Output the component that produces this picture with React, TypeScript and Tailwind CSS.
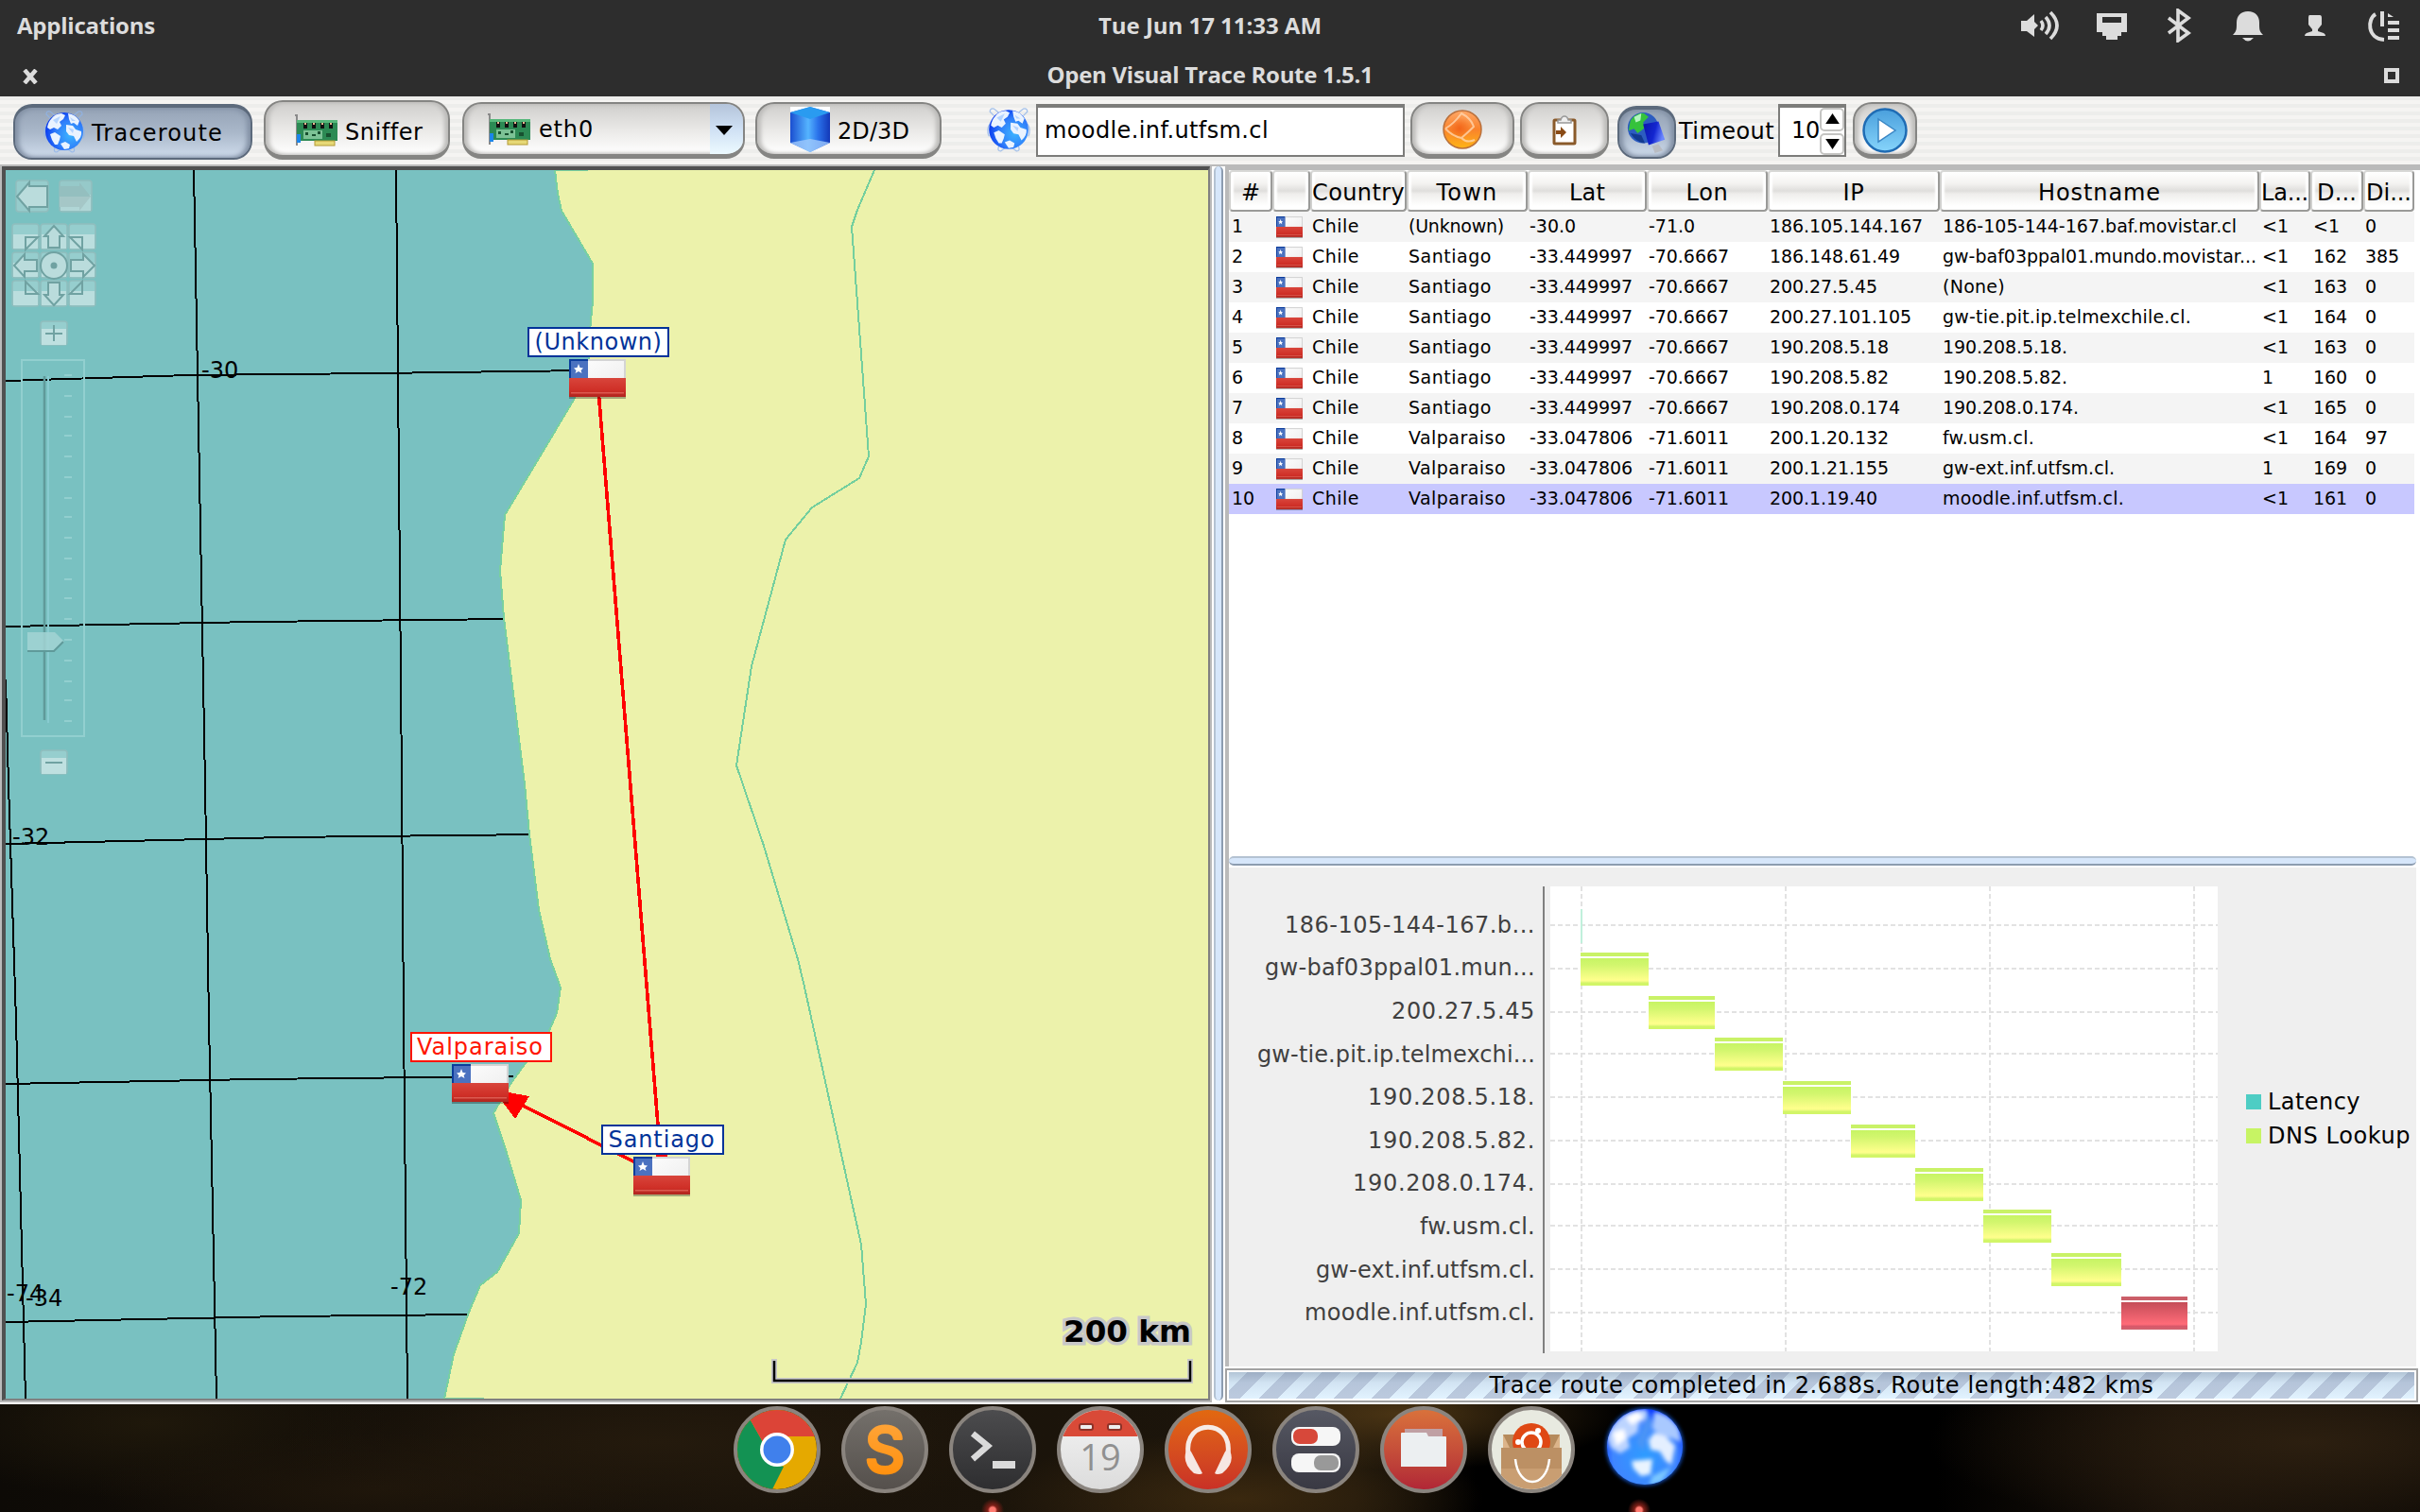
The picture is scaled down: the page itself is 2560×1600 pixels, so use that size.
import React, { useLayoutEffect, useRef, useState } from "react";

/** Text whose tracking is tuned so that its advance is exactly `w` pixels. */
function Fit({ w, children, className = "" }: { w: number; children: string; className?: string }) {
  const ref = useRef<HTMLSpanElement>(null);
  const [ls, setLs] = useState(0);
  useLayoutEffect(() => {
    const el = ref.current;
    if (!el) return;
    el.style.letterSpacing = "0px";
    const natural = el.getBoundingClientRect().width;
    const next = (w - natural) / children.length;
    el.style.letterSpacing = `${next}px`;
    setLs(next);
  }, [w, children]);
  return (
    <span ref={ref} className={`inline-block shrink-0 whitespace-pre ${className}`} style={{ letterSpacing: `${ls}px` }}>
      {children}
    </span>
  );
}

const btn =
  "flex shrink-0 items-center rounded-[20px] border-2 border-b-[5px] border-[#858583] bg-linear-to-b from-[#cfcecc] via-[#e9e8e6] to-white shadow-[inset_4px_0_4px_#bdbcba,inset_-4px_0_4px_#bdbcba]";
const pressed =
  "flex shrink-0 items-center rounded-[20px] border-2 border-t-4 border-[#5c6a7c] bg-linear-to-b from-[#95a3b6] via-[#aab8ca] to-[#cfdcec] shadow-[inset_4px_0_5px_#8391a5,inset_-4px_0_5px_#8391a5]";

function Globe({ className }: { className: string }) {
  return (
    <svg viewBox="0 0 48 48" className={className}>
      <defs>
        <radialGradient id="gl" cx="0.65" cy="0.6" r="0.65">
          <stop offset="0" stopColor="#3cb4ff" />
          <stop offset="0.6" stopColor="#2f7dfa" />
          <stop offset="1" stopColor="#0a3df0" />
        </radialGradient>
      </defs>
      <path d="M9 10 L5 6 Q5 2 9 3 L14 7 M39 10 L43 6 Q43 2 39 3 L34 7 M5 18 Q1 24 4 31 M43 18 Q47 24 44 31 M14 41 Q12 46 16 46 L20 43 M34 41 Q36 46 32 46 L28 43" fill="none" stroke="#8fb4ea" strokeWidth="1.2" opacity="0.8" />
      <circle cx="24" cy="24" r="20" fill="url(#gl)" />
      <path d="M10 11 Q14 5 21 5 L25 7 L23 11 L19 14 L21 18 L17 22 L13 20 L9 22 L6 20 Q7 14 10 11 Z M28 5 Q36 6 40 13 L38 18 L34 15 L31 16 L29 11 Z M26 17 L33 18 L36 22 L42 24 Q43 30 37 35 L34 29 L29 28 L26 24 Z M9 27 L14 25 L20 29 L19 33 L17 38 L14 38 L11 33 Z M20 37 L25 35 L30 38 L29 42 L24 43 Z" fill="#eaf3ff" />
      <path d="M12 12 L20 8 L16 16 Z M30 9 L36 13 L32 13 Z M28 20 L34 22 L33 26 Z" fill="#9cc6ff" opacity="0.7" />
    </svg>
  );
}

function DockGlobe() {
  return (
    <svg viewBox="0 0 96 96" className="-mt-[2px] -mr-1 ml-1 h-[96px] w-[96px] shrink-0 overflow-visible">
      <defs>
        <radialGradient id="dg" cx="0.5" cy="0.62" r="0.6">
          <stop offset="0" stopColor="#2e9cff" />
          <stop offset="0.7" stopColor="#3f86ff" />
          <stop offset="1" stopColor="#0b3cff" />
        </radialGradient>
        <clipPath id="dgc"><circle cx="48" cy="45" r="40" /></clipPath>
        <filter id="soft"><feGaussianBlur stdDeviation="2" /></filter>
      </defs>
      <circle cx="48" cy="45" r="41" fill="#1f6cff" opacity="0.8" filter="url(#soft)" />
      <circle cx="48" cy="45" r="40" fill="url(#dg)" />
      <g clipPath="url(#dgc)">
        <g filter="url(#soft)">
          <path d="M12 26 Q26 4 50 6 L52 14 L42 20 L40 30 L30 36 L32 46 L22 52 L12 46 L8 36 Z" fill="#bcd4ff" />
          <path d="M28 14 L40 8 L46 14 L34 22 Z M14 30 L26 26 L28 36 L18 44 Z" fill="#fff" />
          <path d="M58 8 Q74 10 84 26 L86 40 L76 36 L66 34 L56 26 Z" fill="#a9c9ff" />
          <path d="M58 30 L70 34 L80 44 L76 64 L70 60 L64 50 L54 48 L52 38 Z" fill="#e4efff" />
          <path d="M34 60 L56 58 L54 74 L44 76 L36 68 Z" fill="#e9f4ff" />
          <path d="M56 76 L76 66 L66 82 L52 86 Z" fill="#7cc8ff" />
          <path d="M50 8 L56 20 L50 34 L46 50 L40 40 L46 24 Z" fill="#4f96f4" opacity="0.8" />
        </g>
      </g>
    </svg>
  );
}

function NetCard() {
  return (
    <svg viewBox="0 0 46 34" className="h-[34px] w-[46px] shrink-0">
      <path d="M1 1 H3 V33" fill="none" stroke="#8a8a8a" strokeWidth="2" />
      <rect x="3" y="6" width="43" height="22" fill="#2c8a54" />
      <rect x="3" y="6" width="43" height="3" fill="#58b87c" />
      <path d="M10 9 h4 v6 h-4z M19 9 h4 v6 h-4z M28 9 h4 v6 h-4z M37 9 h4 v6 h-4z" fill="#111" />
      <path d="M11 9 h2 v2 h-2z M20 9 h2 v2 h-2z M29 9 h2 v2 h-2z M38 9 h2 v2 h-2z" fill="#e8b890" />
      <rect x="10" y="17" width="20" height="9" fill="#7cc295" />
      <path d="M12 19 h3 v3 h-3z M19 21 h4 v2 h-4z M25 18 h3 v3 h-3z M34 20 h5 v4 h-5z" fill="#17502f" />
      <rect x="3" y="21" width="4" height="9" fill="#1c86ea" />
      <rect x="22" y="28" width="21" height="5" fill="#e6d877" stroke="#b39a34" strokeWidth="1" />
    </svg>
  );
}

function Flag({ className }: { className: string }) {
  return (
    <svg viewBox="0 0 60 42" preserveAspectRatio="none" className={className}>
      <defs>
        <linearGradient id="fr" x1="0" y1="0" x2="0" y2="1">
          <stop offset="0" stopColor="#d8453b" />
          <stop offset="0.65" stopColor="#cf2f27" />
          <stop offset="1" stopColor="#b0261f" />
        </linearGradient>
        <linearGradient id="fw" x1="0" y1="0" x2="1" y2="1">
          <stop offset="0" stopColor="#ffffff" />
          <stop offset="1" stopColor="#ebebeb" />
        </linearGradient>
      </defs>
      <rect x="0" y="2" width="60" height="40" fill="#000" opacity="0.3" />
      <rect x="1" y="1" width="58" height="38" fill="url(#fw)" stroke="#d4d4d4" strokeWidth="2" />
      <rect x="0" y="20" width="60" height="20" fill="url(#fr)" />
      <rect x="2" y="35" width="56" height="1.500" fill="#dc5a50" />
      <rect x="0" y="0" width="20" height="20" fill="#0b3c9c" />
      <rect x="2" y="2" width="18" height="18" fill="#4b72c0" />
      <path d="M10 5 L11.500 9 L15 9.500 L12.500 12 L13.500 15 L10 13 L6.500 15 L7.500 12 L5 9.500 L8.500 9 Z" fill="#fff" />
    </svg>
  );
}

function TopBar() {
  return (
    <header className="h-[102px] bg-[#2d2d2d] font-['Open_Sans'] text-[24px] font-bold text-[#dcdcdc]">
      <div className="grid h-[54px] grid-cols-[1fr_auto_1fr] items-center">
        <div className="pl-[18px]"><Fit w={146}>Applications</Fit></div>
        <Fit w={236}>Tue Jun 17 11:33 AM</Fit>
        <div className="flex items-center justify-end pr-[22px]">
          <svg viewBox="0 0 40 36" className="mr-[40px] h-9 w-10">
            <path d="M0 13 H6 L14 6 V30 L6 24 H0 Z M14 14 L18 18 L14 22 Z" fill="#dcdcdc" />
            <path d="M21 13 Q25 18 21 23 M26 9 Q34 18 26 27 M31 4 Q45 18 31 32" fill="none" stroke="#dcdcdc" strokeWidth="3.600" />
          </svg>
          <svg viewBox="0 0 32 36" className="mr-[42px] h-9 w-8">
            <path fillRule="evenodd" d="M0 5 H32 V25 H26 V29 H22 V33 H10 V29 H6 V25 H0 Z M6 9 V15 H26 V9 Z" fill="#dcdcdc" />
          </svg>
          <svg viewBox="0 0 26 36" className="mr-[44px] h-9 w-[26px]">
            <path d="M2 10 L23 26 L12 34 V2 L23 10 L2 26" fill="none" stroke="#dcdcdc" strokeWidth="3.600" />
          </svg>
          <svg viewBox="0 0 32 36" className="mr-[44px] h-9 w-8">
            <path d="M16 3 C24 3 28 8 28 15 C28 22 28 24 32 28 H0 C4 24 4 22 4 15 C4 8 8 3 16 3 Z M10 31 H22 Q16 38 10 31 Z" fill="#dcdcdc" />
          </svg>
          <svg viewBox="0 0 22 36" className="mr-[44px] h-9 w-[22px]">
            <path d="M5 7 H16 Q18 7 18 10 V17 L14 22 V24 L20 26 Q22 27 22 29 H0 Q0 27 2 26 L8 24 V22 L4 17 V10 Q4 7 5 7 Z" fill="#dcdcdc" />
          </svg>
          <svg viewBox="0 0 34 36" className="h-9 w-[34px]">
            <path d="M9 6 C0 11 0 32 18 33" fill="none" stroke="#dcdcdc" strokeWidth="4" />
            <path d="M14 3 H18 V19 H14 Z M22 5 L28 9 H22 Z M22 13 H34 V17 H22 Z M22 21 H34 V25 H22 Z M22 29 H34 V33 H22 Z" fill="#dcdcdc" />
          </svg>
        </div>
      </div>
      <div className="grid h-12 grid-cols-[1fr_auto_1fr] items-center pt-[2px]">
        <svg viewBox="0 0 16 16" className="ml-6 mt-1 h-4 w-4">
          <path d="M2 1 L14 15 M14 1 L2 15" stroke="#dcdcdc" strokeWidth="4.500" />
        </svg>
        <Fit w={345}>Open Visual Trace Route 1.5.1</Fit>
        <div className="mr-[22px] mt-[2px] h-4 w-4 justify-self-end border-4 border-[#dcdcdc]" />
      </div>
    </header>
  );
}

function Toolbar() {
  return (
    <div className="flex h-[72px] shrink-0 items-start bg-[repeating-linear-gradient(180deg,#ededeb_0_4px,#f5f4f2_4px_8px)]">
      <div className={`${pressed} ml-[14px] mt-2 h-[59px] w-[253px] pl-[28px]`}>
        <Globe className="mb-1 h-[48px] w-[48px]" />
        <Fit w={139} className="ml-[5px]">Traceroute</Fit>
      </div>
      <div className={`${btn} ml-3 mt-1 h-[63px] w-[197px] pl-[30px] pt-1`}>
        <NetCard />
        <Fit w={82} className="ml-[8px] mt-1">Sniffer</Fit>
      </div>
      <div className={`${btn} ml-[13px] mt-[6px] h-[60px] w-[299px] overflow-hidden pl-[24px]`}>
        <NetCard />
        <Fit w={58} className="ml-[9px]">eth0</Fit>
        <div className="ml-auto flex h-full w-[35px] items-center bg-linear-to-b from-[#b4c4da] via-[#cfe0f4] to-[#ecfaff] pl-[6px]">
          <svg viewBox="0 0 18 10" className="mt-[2px] h-[10px] w-[18px]"><path d="M0 0 H18 L9 10 Z" /></svg>
        </div>
      </div>
      <div className={`${btn} ml-[11px] mt-[6px] h-[60px] w-[197px] pl-[35px]`}>
        <svg viewBox="0 0 42 48" className="h-[48px] w-[42px] shrink-0">
          <defs>
            <linearGradient id="cy" x1="0" x2="1" y1="0" y2="0">
              <stop offset="0" stopColor="#1a4ed0" /><stop offset="0.45" stopColor="#55b4ff" /><stop offset="0.7" stopColor="#2a72ea" /><stop offset="1" stopColor="#1338b8" />
            </linearGradient>
          </defs>
          <rect width="42" height="8" fill="#fff" />
          <path d="M0 6 L21 0 L42 6 V38 L21 48 L0 38 Z" fill="url(#cy)" />
          <path d="M0 6 L21 0 L42 6 L21 13 Z" fill="#2a9bf0" />
          <path d="M0 38 L21 34 L42 38 L21 48 Z" fill="#9fc8fb" opacity="0.8" />
        </svg>
        <Fit w={76} className="ml-[8px] mt-1">2D/3D</Fit>
      </div>
      <Globe className="ml-[46px] mt-[10px] h-[50px] w-[50px] shrink-0" />
      <div className="ml-[4px] mt-2 flex h-14 w-[390px] shrink-0 items-center border-2 border-t-4 border-[#7c7c7a] bg-white pb-[3px] pl-[7px]">
        <Fit w={237}>moodle.inf.utfsm.cl</Fit>
      </div>
      <div className={`${btn} ml-[6px] mt-[6px] h-[60px] w-[110px] justify-center`}>
        <svg viewBox="0 0 42 42" className="h-[42px] w-[42px]">
          <defs>
            <linearGradient id="or" x1="0" y1="0" x2="0" y2="1"><stop offset="0" stopColor="#ffa766" /><stop offset="0.5" stopColor="#f9832c" /><stop offset="1" stopColor="#ffb515" /></linearGradient>
            <radialGradient id="or2"><stop offset="0" stopColor="#f2661a" /><stop offset="1" stopColor="#f2661a" stopOpacity="0" /></radialGradient>
          </defs>
          <circle cx="21" cy="21" r="20" fill="url(#or)" stroke="#b9703c" strokeWidth="1.500" />
          <circle cx="18" cy="20" r="12" fill="url(#or2)" />
          <path d="M3 20 Q12 15 20 4 Q30 9 33 18 Q27 24 20 30 Q10 28 3 20 M20 30 Q26 36 34 32" fill="none" stroke="#ffd9b4" strokeWidth="2" opacity="0.75" />
        </svg>
      </div>
      <div className={`${btn} ml-[6px] mt-[6px] h-[60px] w-[94px] justify-center`}>
        <svg viewBox="0 0 26 32" className="mt-[3px] h-8 w-[26px]">
          <rect x="2" y="5" width="22" height="25" rx="1" fill="#fff" stroke="#8a5a2a" strokeWidth="3" />
          <path d="M6 8 V5 H9 Q10 1 13 1 Q16 1 17 5 H20 V8 Z" fill="#eee" stroke="#999" strokeWidth="1.500" />
          <path d="M4 16 H9 V12 L15 18 L9 24 V20 H4 Z" fill="#8a4b16" />
        </svg>
      </div>
      <div className={`${pressed} ml-[9px] mt-[10px] h-[56px] w-[62px] justify-center`}>
        <svg viewBox="0 0 44 48" className="h-[46px] w-[44px]">
          <defs><linearGradient id="mo" x1="0" y1="0" x2="1" y2="0.3"><stop offset="0" stopColor="#0a14a8" /><stop offset="0.6" stopColor="#1326d0" /><stop offset="1" stopColor="#6a86ff" /></linearGradient></defs>
          <circle cx="18" cy="18" r="17" fill="#2c5cc0" />
          <path d="M4 10 Q10 1 19 2 L24 6 L18 12 L20 18 L12 24 L8 19 L2 21 Z" fill="#35c23c" />
          <path d="M8 6 L16 2 L15 10 L10 12 Z" fill="#b4f5c0" />
          <path d="M4 24 Q10 34 20 35 L16 26 Z" fill="#123a90" />
          <path d="M18 14 L35 11 L42 31 L24 37 Z" fill="url(#mo)" />
          <path d="M28 38 L35 36 L40 43 L31 46 Z" fill="#b9bcc2" />
        </svg>
      </div>
      <Fit w={101} className="ml-[3px] mt-[23px]">Timeout</Fit>
      <div className="ml-[4px] mt-2 flex h-14 w-[72px] shrink-0 border-2 border-t-4 border-[#7c7c7a] bg-white">
        <Fit w={30} className="ml-[12px] mt-[10px]">10</Fit>
        <div className="flex flex-1 flex-col gap-[2px]">
          <div className="flex flex-1 items-end justify-center rounded-[5px] border-2 border-[#c4c4c2] bg-white pb-[6px]">
            <svg viewBox="0 0 16 12" className="h-[11px] w-[15px]"><path d="M0 12 L8 0 L16 12 Z" /></svg>
          </div>
          <div className="flex flex-1 items-start justify-center rounded-[5px] border-2 border-[#c4c4c2] bg-white pt-[4px]">
            <svg viewBox="0 0 16 12" className="h-[11px] w-[15px]"><path d="M0 0 L8 12 L16 0 Z" /></svg>
          </div>
        </div>
      </div>
      <div className={`${btn} ml-[7px] mt-[6px] h-[60px] w-[68px] justify-center`}>
        <svg viewBox="0 0 48 48" className="mt-[2px] h-[48px] w-[48px] shrink-0">
          <defs><linearGradient id="pl" x1="0" y1="0" x2="0" y2="1"><stop offset="0" stopColor="#4a9fdc" /><stop offset="1" stopColor="#86d4fb" /></linearGradient></defs>
          <circle cx="24" cy="24" r="22.500" fill="url(#pl)" stroke="#1f6cb4" strokeWidth="2.500" />
          <path d="M17 12 L35 24 L17 36 Z" fill="#fff" stroke="#3a86c4" strokeWidth="1.500" />
        </svg>
      </div>
    </div>
  );
}

const ticks = Array.from({ length: 18 }, (_, i) => 397 + Math.round(i * 10.77) * 2);

function MapPanel() {
  return (
    <div className="relative h-[1300px] w-[1272px] overflow-hidden bg-[#79c1c1]">
      <svg viewBox="6 180 1272 1300" className="block h-[1300px] w-[1272px]">
        <g fill="none" stroke="#000" strokeWidth="2" shapeRendering="crispEdges">
          <path d="M205 180 L217 830 L221 1080 L229 1480 M419 180 L425 830 L427 1080 L431 1480 M6 719 L9 830 L17 1080 L27 1480" />
          <path d="M6 403 L200 397 L400 395 L620 392 M6 663 L270 658 L540 655 M6 893 L300 886 L570 883 M6 1147 L270 1142 L543 1139 M6 1399 L300 1393 L500 1391" />
        </g>
        <path
          d="M587 180 L590 205 L594 223 L627 279 L627 319 L624 350 L622 390 L607 423 L534 545 L529 604 L533 654 L555 830 L560 883 L570 963 L582 1015 L593 1045 L589 1072 L580 1093 L556 1125 L540 1147 L522 1178 L536 1220 L551 1270 L549 1305 L526 1346 L508 1360 L495 1391 L480 1433 L470 1480 L1290 1490 L1290 170 Z"
          fill="#ecf2ab" stroke="#78d0a0" strokeWidth="2" shapeRendering="crispEdges"
        />
        <path d="M543 1139 H533" stroke="#000" strokeWidth="2" />
        <path
          d="M925 180 L907 222 L901 240 L919 483 L909 506 L859 537 L831 571 L795 705 L779 810 L808 895 L844 1015 L850 1040 L911 1317 L916 1380 L911 1420 L907 1442 L889 1480"
          fill="none" stroke="#74cf9e" strokeWidth="2" shapeRendering="crispEdges"
        />
        <g stroke="#f00" strokeWidth="3.600" shapeRendering="crispEdges">
          <path d="M632 400 L700 1240 M700 1244 L545 1166" fill="none" />
          <path d="M522 1153 L560 1160 L545 1184 Z M694 1220 H706 V1226 H694 Z" fill="#f00" stroke="none" />
        </g>
        <g fontFamily="DejaVu Sans" fontSize="24">
          <text x="213" y="400">-30</text>
          <text x="13" y="894">-32</text>
          <text x="7" y="1377">-74</text>
          <text x="27" y="1382">-34</text>
          <text x="413" y="1370">-72</text>
        </g>
        <text x="1125" y="1420" fontFamily="DejaVu Sans" fontWeight="bold" fontSize="32" textLength="135" lengthAdjust="spacingAndGlyphs" stroke="#c8c8c8" strokeWidth="7" paintOrder="stroke">200 km</text>
        <path d="M819 1438 V1461 H1259 V1438" fill="none" stroke="#c8c8c8" strokeWidth="6" />
        <path d="M819 1440 V1461 H1259 V1440" fill="none" stroke="#000" strokeWidth="2.500" />

        <g opacity="0.62">
          <g fill="#d5e8e8" stroke="#9fbcbc" strokeWidth="1.500">
            <rect x="17" y="191" width="34" height="33" rx="3" fill="#a9d4d4" />
            <rect x="63" y="191" width="34" height="33" rx="3" fill="#a9cfcf" />
            <rect x="64" y="206" width="32" height="17" fill="#d3e4e4" stroke="none" />
            {[13, 43, 73].map((x) => [237, 267, 297].map((y) => (
              <g key={`${x}-${y}`}>
                <rect x={x} y={y} width="28" height="27" rx="3" fill="#a9d6d6" />
                <rect x={x + 1} y={y + 11} width="26" height="15" fill="#e4f0f0" stroke="none" />
              </g>
            )))}
            <rect x="43" y="340" width="28" height="25" rx="3" fill="#a9d6d6" />
            <rect x="44" y="348" width="26" height="17" stroke="none" fill="#eaf4f4" />
            <rect x="43" y="794" width="28" height="25" rx="3" fill="#a9d6d6" />
            <rect x="44" y="802" width="26" height="17" stroke="none" fill="#eaf4f4" />
          </g>
          <g fill="none" stroke="#6b9090" strokeWidth="2">
            <path d="M18 208 L31 193 V197 H50 V219 H31 V223 Z" fill="#e2eeee" />
            <path d="M96 208 L84 193 V197 H63 V208 Z" fill="#a6bebe" stroke="none" />
            <path d="M96 208 L84 223 V219 H63 V208 Z" fill="#c0cccc" stroke="none" />
            <path d="M57 239 L67 250 H63 V262 H51 V250 H47 Z M57 323 L67 312 H63 V299 H51 V312 H47 Z M15 281 L26 269 V275 H39 V287 H26 V293 Z M100 281 L88 269 V275 H75 V287 H88 V293 Z" fill="#e2eeee" />
            <path d="M27 264 V251 H40 Z M87 264 V251 H74 Z M27 298 V311 H40 Z M87 298 V311 H74 Z" />
            <circle cx="57" cy="281" r="14" fill="#e2eeee" />
            <circle cx="57" cy="281" r="2.500" fill="#6b9090" />
            <path d="M57 344 V361 M48 353 H66 M48 807 H66" />
          </g>
        </g>
        <g fill="none" stroke="#92cfcf" strokeWidth="2">
          <rect x="23" y="381" width="66" height="398" />
          {ticks.map((y) => <path key={y} d={`M68 ${y} H76`} />)}
          <path d="M51 398 V765" stroke="#88cbd0" />
        </g>
        <path d="M47 398 V762" stroke="#5f9a9a" strokeWidth="2.500" />
        <path d="M29 669 H58 L68 679 L58 689 H29 Z" fill="#a2d4d4" fillOpacity="0.85" />
        <path d="M29 689 H57 L67 679" fill="none" stroke="#5f9a9a" strokeWidth="2" />
      </svg>
      <div className="absolute left-[552px] top-[166px] flex h-8 w-[150px] items-center justify-center border-2 border-[#039] bg-white text-[#039]"><Fit w={135}>(Unknown)</Fit></div>
      <div className="absolute left-[428px] top-[912px] flex h-8 w-[150px] items-center justify-center border-2 border-[#ff1500] bg-white text-[#ff1500]"><Fit w={134} className="-ml-[2px]">Valparaiso</Fit></div>
      <div className="absolute left-[630px] top-[1010px] flex h-8 w-[130px] items-center justify-center border-2 border-[#039] bg-white text-[#039]"><Fit w={113} className="-ml-[2px]">Santiago</Fit></div>
      <Flag className="absolute left-[596px] top-[200px] h-[42px] w-[60px]" />
      <Flag className="absolute left-[472px] top-[946px] h-[42px] w-[60px]" />
      <Flag className="absolute left-[664px] top-[1044px] h-[42px] w-[60px]" />
    </div>
  );
}

const grid = "grid grid-cols-[46px_40px_102px_128px_126px_128px_182px_338px_54px_56px_54px]";
const heads: [string, number][] = [["#", 20], ["", 0], ["Country", 98], ["Town", 65], ["Lat", 38], ["Lon", 45], ["IP", 23], ["Hostname", 130], ["La...", 50], ["D...", 42], ["Di...", 48]];

type Hop = [string, number, string, string, string, string, number, string, string, string];
const hops: Hop[] = [
  ["(Unknown)", 101, "-30.0", "-71.0", "186.105.144.167", "186-105-144-167.baf.movistar.cl", 311, "<1", "<1", "0"],
  ["Santiago", 88, "-33.449997", "-70.6667", "186.148.61.49", "gw-baf03ppal01.mundo.movistar...", 332, "<1", "162", "385"],
  ["Santiago", 88, "-33.449997", "-70.6667", "200.27.5.45", "(None)", 66, "<1", "163", "0"],
  ["Santiago", 88, "-33.449997", "-70.6667", "200.27.101.105", "gw-tie.pit.ip.telmexchile.cl.", 263, "<1", "164", "0"],
  ["Santiago", 88, "-33.449997", "-70.6667", "190.208.5.18", "190.208.5.18.", 132, "<1", "163", "0"],
  ["Santiago", 88, "-33.449997", "-70.6667", "190.208.5.82", "190.208.5.82.", 132, "1", "160", "0"],
  ["Santiago", 88, "-33.449997", "-70.6667", "190.208.0.174", "190.208.0.174.", 144, "<1", "165", "0"],
  ["Valparaiso", 103, "-33.047806", "-71.6011", "200.1.20.132", "fw.usm.cl.", 97, "<1", "164", "97"],
  ["Valparaiso", 103, "-33.047806", "-71.6011", "200.1.21.155", "gw-ext.inf.utfsm.cl.", 182, "1", "169", "0"],
  ["Valparaiso", 103, "-33.047806", "-71.6011", "200.1.19.40", "moodle.inf.utfsm.cl.", 192, "<1", "161", "0"],
];

function num(s: string) {
  return [...s].reduce((a, c) => a + (c === "." ? 6 : c === "-" ? 7 : c === "<" ? 16 : 12), 0);
}

function HopTable() {
  return (
    <div className="h-[726px] w-[1260px] bg-white">
      <div className={`${grid} h-11`}>
        {heads.map(([h, w], i) => (
          <div key={i} className="flex items-center justify-center overflow-hidden rounded-[4px] border-b-2 border-l-2 border-r-2 border-t-2 border-b-[#9a9a98] border-l-[#d0d0ce] border-r-[#9a9a98] border-t-[#d8d8d6] bg-[linear-gradient(180deg,#fff_0%,#f4f3f1_30%,#dfdedc_50%,#efeeec_58%,#fff_90%)] pt-[4px] shadow-[inset_3px_0_2px_#fff,inset_-3px_0_2px_#fff]">
            {h && <Fit w={w}>{h}</Fit>}
          </div>
        ))}
      </div>
      {hops.map((r, i) => (
        <div key={i} className={`${grid} h-8 w-[1254px] items-center text-[19px] leading-[30px] ${i === 9 ? "bg-[#c8c8ff]" : i % 2 ? "bg-white" : "bg-[#f4f4f4]"}`}>
          <Fit w={num(String(i + 1))} className="-mt-[2px] ml-[3px] justify-self-start">{String(i + 1)}</Fit>
          <Flag className="ml-1 h-[23px] w-7" />
          <Fit w={50} className="-mt-[2px] ml-[2px] justify-self-start">Chile</Fit>
          <Fit w={r[1]} className="-mt-[2px] ml-[2px] justify-self-start">{r[0]}</Fit>
          <Fit w={num(r[2])} className="-mt-[2px] ml-[2px] justify-self-start">{r[2]}</Fit>
          <Fit w={num(r[3])} className="-mt-[2px] ml-[2px] justify-self-start">{r[3]}</Fit>
          <Fit w={num(r[4])} className="-mt-[2px] ml-[2px] justify-self-start">{r[4]}</Fit>
          <Fit w={r[6]} className="-mt-[2px] ml-[3px] justify-self-start">{r[5]}</Fit>
          <Fit w={num(r[7])} className="-mt-[2px] ml-[3px] justify-self-start">{r[7]}</Fit>
          <Fit w={num(r[8])} className="-mt-[2px] ml-[3px] justify-self-start">{r[8]}</Fit>
          <Fit w={num(r[9])} className="-mt-[2px] ml-[2px] justify-self-start">{r[9]}</Fit>
        </div>
      ))}
    </div>
  );
}

const labels: [string, number][] = [
  ["186-105-144-167.b...", 265], ["gw-baf03ppal01.mun...", 286], ["200.27.5.45", 152], ["gw-tie.pit.ip.telmexchi...", 294], ["190.208.5.18.", 177],
  ["190.208.5.82.", 177], ["190.208.0.174.", 193], ["fw.usm.cl.", 122], ["gw-ext.inf.utfsm.cl.", 232], ["moodle.inf.utfsm.cl.", 244],
];
const rowY = [979, 1025, 1071, 1115, 1161, 1207, 1253, 1297, 1343, 1389];
const edges = [1672, 1744, 1814, 1886, 1958, 2026, 2098, 2170, 2244, 2314];

function Chart() {
  return (
    <div className="flex h-[528px] w-[1256px] bg-[#efefef]">
      <div className="flex w-[332px] flex-col items-end pr-[8px] pt-[38px] text-[#404040]">
        {labels.map(([t, w]) => (
          <div key={t} className="flex h-[45.600px] items-center"><Fit w={w}>{t}</Fit></div>
        ))}
      </div>
      <div className="mt-5 h-[494px] w-[2px] bg-[#808080]" />
      <svg viewBox="1640 938 706 492" className="ml-[6px] mt-5 h-[492px] w-[706px] shrink-0 bg-white">
        <defs>
          <linearGradient id="bg" x1="0" y1="0" x2="0" y2="1">
            <stop offset="0" stopColor="#c7f464" /><stop offset="0.25" stopColor="#d2f66e" /><stop offset="0.8" stopColor="#ffff8c" /><stop offset="0.86" stopColor="#ecfa80" /><stop offset="0.9" stopColor="#d2f568" /><stop offset="1" stopColor="#d2f568" />
          </linearGradient>
          <linearGradient id="br" x1="0" y1="0" x2="0" y2="1">
            <stop offset="0" stopColor="#c44d58" /><stop offset="0.8" stopColor="#ff6b78" /><stop offset="0.88" stopColor="#d8586a" /><stop offset="1" stopColor="#d06470" />
          </linearGradient>
        </defs>
        <g stroke="#e2e2e2" strokeWidth="2" strokeDasharray="5 3">
          {[1673, 1889, 2105, 2321].map((x) => <path key={x} d={`M${x} 938 V1430`} />)}
          {rowY.map((y) => <path key={y} d={`M1640 ${y} H2346`} />)}
        </g>
        <rect x="1672" y="962" width="2" height="36" fill="#c0f0dc" />
        {rowY.slice(1).map((y, i) => (
          <g key={y}>
            <rect x={edges[i]} y={y - 17} width={edges[i + 1] - edges[i]} height="35" fill="#fff" />
            <rect x={edges[i]} y={y - 17} width={edges[i + 1] - edges[i]} height="4" fill={i === 8 ? "#cb5f69" : "#c9f267"} />
            <rect x={edges[i]} y={y - 11} width={edges[i + 1] - edges[i]} height="29" fill={i === 8 ? "url(#br)" : "url(#bg)"} />
          </g>
        ))}
      </svg>
      <div className="ml-[30px] mt-[230px] flex flex-col text-black">
        <div className="flex h-9 items-center"><span className="mr-[7px] h-4 w-4 bg-[#4ecdc4]" /><Fit w={98}>Latency</Fit></div>
        <div className="flex h-9 items-center"><span className="mr-[7px] h-4 w-4 bg-[#c7f464]" /><Fit w={151}>DNS Lookup</Fit></div>
      </div>
    </div>
  );
}

const ring = "flex h-[92px] w-[92px] shrink-0 items-center justify-center overflow-hidden rounded-full border-4 border-[#8a847e]";

function Dock() {
  return (
    <footer className="relative flex h-[114px] items-start justify-center gap-[22px] overflow-hidden bg-[radial-gradient(ellipse_240px_60px_at_1480px_10px,#4a3414,transparent),radial-gradient(ellipse_260px_70px_at_1310px_100px,#3a280f,transparent),radial-gradient(ellipse_400px_80px_at_700px_40px,#241a0d,transparent),radial-gradient(ellipse_300px_60px_at_400px_90px,#1f160b,transparent),radial-gradient(ellipse_260px_80px_at_160px_20px,#1f180b,transparent),radial-gradient(ellipse_400px_100px_at_2440px_40px,#2c1f10,transparent),linear-gradient(90deg,#0d0a06_0%,#1a130a_30%,#1c150b_56%,#000_61%,#000_80%,#1a120a_90%,#0f0b06_100%)] pt-[2px]">
      <div className={ring}>
        <svg viewBox="4 4 84 84" className="h-full w-full">
          <rect width="92" height="92" fill="#e5a900" />
          <path d="M0 0 L18 15 L31 38 L40 60 L53 64 L39 92 H0 Z" fill="#139253" />
          <path d="M0 0 L18 15 L31 38 L46 32 H92 V0 Z" fill="#dc4437" />
          <circle cx="46" cy="46" r="18" fill="#fff" />
          <circle cx="46" cy="46" r="14.500" fill="#4080ec" />
        </svg>
      </div>
      <div className={`${ring} bg-linear-to-b from-[#74706b] to-[#55504c]`}>
        <svg viewBox="0 0 84 84" className="h-full w-full">
          <defs><linearGradient id="so" x1="0" y1="0" x2="0" y2="1"><stop offset="0" stopColor="#ffa840" /><stop offset="1" stopColor="#ff8c05" /></linearGradient></defs>
          <text x="42" y="66" textAnchor="middle" fontFamily="Inter" fontWeight="500" fontSize="66" fill="url(#so)" stroke="url(#so)" strokeWidth="3" strokeLinejoin="round">S</text>
        </svg>
      </div>
      <div className={`${ring} bg-linear-to-b from-[#4c4c4e] to-[#2e2e30]`}>
        <svg viewBox="4 4 84 84" className="h-full w-full">
          <path d="M25 29 L41 42 L25 56" fill="none" stroke="#dadada" strokeWidth="6.500" />
          <rect x="46" y="58" width="24" height="8" fill="#dadada" />
        </svg>
      </div>
      <div className={`${ring} flex-col bg-linear-to-b from-[#f4f4f4] to-[#dcdcdc]`}>
        <div className="flex h-7 w-full items-center justify-center gap-[14px] bg-[#d94a38] pt-[8px]">
          <span className="h-[8px] w-4 rounded-[3px] border-2 border-[#8d3228] bg-[#eee]" />
          <span className="h-[8px] w-4 rounded-[3px] border-2 border-[#8d3228] bg-[#eee]" />
        </div>
        <span className="h-14 w-full text-center font-['Open_Sans'] text-[38px] font-normal leading-[42px] text-[#909090]">19</span>
      </div>
      <div className={`${ring} bg-linear-to-b from-[#e2680f] to-[#c93026]`}>
        <svg viewBox="4 4 84 84" className="h-full w-full">
          <path d="M25 50 C20 13 72 13 67 50" fill="none" stroke="#f6ebe6" strokeWidth="5" />
          <path d="M23 47 Q27 45 29 50 L40 71 Q38 73 31 71 Q18 60 23 47 Z M69 47 Q65 45 63 50 L53 71 Q55 73 61 71 Q75 60 69 47 Z" fill="#f6e6e2" />
        </svg>
      </div>
      <div className={`${ring} bg-linear-to-b from-[#565863] to-[#393943]`}>
        <svg viewBox="4 4 84 84" className="h-full w-full">
          <rect x="20" y="22" width="52" height="20" rx="8" fill="#f6f6f6" />
          <rect x="22" y="24" width="26" height="16" rx="7" fill="#d7483a" />
          <rect x="20" y="50" width="52" height="20" rx="8" fill="#f6f6f6" />
          <rect x="44" y="52" width="26" height="16" rx="7" fill="#999" />
        </svg>
      </div>
      <div className={`${ring} bg-linear-to-b from-[#d9713b] to-[#b12636]`}>
        <svg viewBox="4 4 84 84" className="h-full w-full">
          <rect x="26" y="24" width="40" height="14" fill="#c0a0a4" />
          <path d="M22 29 Q22 28 23 28 H49 L51 32 H69 Q70 32 70 33 V64 H22 Z" fill="#eceff1" />
        </svg>
      </div>
      <div className={`${ring} bg-[#e8eae0]`}>
        <svg viewBox="4 4 84 84" className="h-full w-full">
          <path d="M16 30 H76 V46 H16 Z" fill="#b58a5c" />
          <path d="M16 30 L24 46 H16 Z M76 30 L68 46 H76 Z" fill="#dcb48a" />
          <circle cx="46" cy="38" r="20" fill="#df4814" />
          <circle cx="46" cy="38" r="10" fill="none" stroke="#fff" strokeWidth="3.500" />
          <circle cx="32" cy="38" r="3" fill="#fff" /><circle cx="53" cy="26" r="3" fill="#fff" />
          <rect x="14" y="44" width="64" height="50" fill="#c99e72" />
          <rect x="14" y="44" width="64" height="22" fill="#bc9064" />
          <path d="M29 56 C32 88 62 88 65 56" fill="none" stroke="#fff" strokeWidth="2.500" />
        </svg>
      </div>
      <DockGlobe />
      <span className="absolute left-[1038px] top-[100px] h-6 w-6 rounded-full bg-[radial-gradient(circle,#ff7a70_0_3px,#802018_5px,transparent_12px)]" />
      <span className="absolute left-[1722px] top-[100px] h-6 w-6 rounded-full bg-[radial-gradient(circle,#ff7a70_0_3px,#802018_5px,transparent_12px)]" />
    </footer>
  );
}

export default function App() {
  return (
    <div className="flex h-[1600px] w-[2560px] flex-col overflow-hidden bg-[#f4f3f1] font-['DejaVu_Sans'] text-[24px] leading-[28px] text-black">
      <TopBar />
      <Toolbar />
      <main className="flex h-[1312px] shrink-0 border-b-2 border-white bg-[#bababa]">
        <div className="ml-[2px] mt-[2px] h-[1306px] w-[1278px] border-b-2 border-l-4 border-r-2 border-t-4 border-[#505050] border-b-[#808080] border-r-[#808080]">
          <MapPanel />
        </div>
        <div className="ml-[2px] mt-[2px] flex w-[14px] justify-center bg-white">
          <div className="h-[1306px] w-[10px] rounded-[5px] border-l-2 border-r-2 border-l-[#b4c2d2] border-r-[#8c9cb0] bg-[#d6e6fa]" />
        </div>
        <div className="ml-[4px] flex w-[1260px] flex-col border-t-[6px] border-[#bababa]">
          <HopTable />
          <div className="flex h-3 w-full shrink-0 items-start bg-white pr-1">
            <div className="h-[10px] w-full rounded-[5px] border-b-2 border-t-2 border-b-[#8c9cb0] border-t-[#b4c2d2] bg-[#d6e6fa]" />
          </div>
          <div className="bg-white"><Chart /></div>
          <div className="-ml-[4px] mt-0 h-[38px] w-[1264px] shrink-0 bg-white pt-[2px]">
            <div className="h-[36px] w-[1262px] border-2 border-[#a2a2a2] p-[2px]">
              <div className="flex h-[28px] items-center justify-center bg-[linear-gradient(180deg,rgba(120,140,165,0.45)_0%,rgba(160,180,205,0.25)_40%,rgba(255,255,255,0)_100%),repeating-linear-gradient(135deg,#e2f3ff_0_14px,#bccade_14px_28px)]">
                <Fit w={703}>Trace route completed in 2.688s. Route length:482 kms</Fit>
              </div>
            </div>
          </div>
        </div>
      </main>
      <Dock />
    </div>
  );
}
